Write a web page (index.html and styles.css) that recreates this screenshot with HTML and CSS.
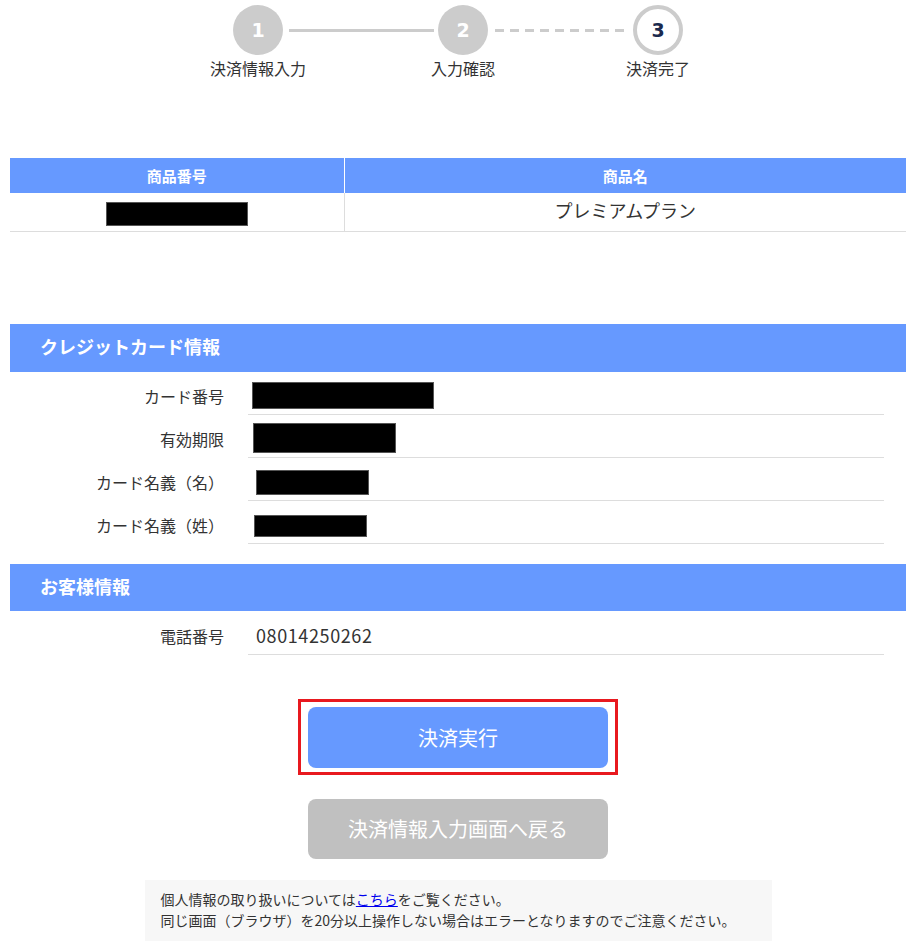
FILE: index.html
```html
<!DOCTYPE html>
<html lang="ja">
<head>
<meta charset="utf-8">
<title>決済確認</title>
<link rel="stylesheet" href="styles.css">
</head>
<body>
<div class="page">
  <div class="stepper">
    <div class="step">
      <div class="circle done">1</div>
      <div class="step-label">決済情報入力</div>
    </div>
    <div class="connector solid"></div>
    <div class="step">
      <div class="circle done">2</div>
      <div class="step-label">入力確認</div>
    </div>
    <div class="connector dashed"></div>
    <div class="step">
      <div class="circle current">3</div>
      <div class="step-label">決済完了</div>
    </div>
  </div>

  <table class="product">
    <thead>
      <tr><th class="col-id">商品番号</th><th>商品名</th></tr>
    </thead>
    <tbody>
      <tr><td class="col-id"><span class="redact r-id"></span></td><td class="name-cell">プレミアムプラン</td></tr>
    </tbody>
  </table>

  <div class="section-head card-head">クレジットカード情報</div>
  <div class="info-row">
    <div class="info-label">カード番号</div>
    <div class="info-value"><span class="redact r1"></span></div>
  </div>
  <div class="info-row">
    <div class="info-label">有効期限</div>
    <div class="info-value"><span class="redact r2"></span></div>
  </div>
  <div class="info-row">
    <div class="info-label">カード名義（名）</div>
    <div class="info-value"><span class="redact r3"></span></div>
  </div>
  <div class="info-row">
    <div class="info-label">カード名義（姓）</div>
    <div class="info-value"><span class="redact r4"></span></div>
  </div>

  <div class="section-head customer-head">お客様情報</div>
  <div class="info-row phone-row">
    <div class="info-label">電話番号</div>
    <div class="info-value"><span class="phone">08014250262</span></div>
  </div>

  <div class="confirm-frame">
    <button class="btn btn-primary" type="button">決済実行</button>
  </div>
  <button class="btn btn-back" type="button">決済情報入力画面へ戻る</button>

  <div class="notice">
    <p>個人情報の取り扱いについては<a href="#" class="notice-link">こちら</a>をご覧ください。</p>
    <p>同じ画面（ブラウザ）を20分以上操作しない場合はエラーとなりますのでご注意ください。</p>
  </div>
</div>
</body>
</html>
```

FILE: styles.css
```css
* { box-sizing: border-box; }

html, body {
  margin: 0;
  padding: 0;
  background: #fff;
}

body {
  font-family: "Noto Sans CJK JP", "Noto Sans", sans-serif;
  color: #333;
}

.page {
  padding: 0 10px 4px;
}

/* stepper */
.stepper {
  display: flex;
  width: 450px;
  margin: 5px auto 0;
}

.step {
  width: 50px;
  display: flex;
  flex-direction: column;
  align-items: center;
}

.circle {
  width: 50px;
  height: 50px;
  border-radius: 50%;
  display: flex;
  align-items: center;
  justify-content: center;
  font-family: "DejaVu Sans", sans-serif;
  font-weight: bold;
  font-size: 19px;
}

.circle.done {
  background: #cccccc;
  color: #fff;
}

.circle.current {
  background: #fff;
  border: 4px solid #cccccc;
  color: #1b2a4e;
}

.step-label {
  white-space: nowrap;
  font-size: 16px;
  line-height: 24px;
  margin-top: 1px;
}

.connector {
  height: 3px;
  margin-top: 24px;
}

.connector.solid {
  width: 145px;
  margin-left: 6px;
  margin-right: 4px;
  background: #cccccc;
}

.connector.dashed {
  width: 134px;
  margin-left: 7px;
  margin-right: 4px;
  background: repeating-linear-gradient(to right, #cccccc 0 9px, transparent 9px 15px);
}

/* product table */
.product {
  width: 100%;
  border-collapse: collapse;
  margin-top: 78px;
}

.product th {
  background: #6699ff;
  color: #fff;
  font-size: 15px;
  font-weight: bold;
  height: 35px;
  padding: 0;
  text-align: center;
}

.product th.col-id {
  border-right: 1px solid #fff;
}

.product td {
  height: 38px;
  padding: 0;
  text-align: center;
  font-size: 18px;
  border-bottom: 1px solid #dddddd;
  vertical-align: middle;
}

.product td.name-cell {
  padding-bottom: 3px;
}

.product td.col-id {
  border-right: 1px solid #dddddd;
}

.col-id {
  width: 334px;
}

.redact {
  display: inline-block;
  background: #000;
  border: 1px solid #555;
  vertical-align: middle;
}

.r-id { width: 142px; height: 24px; }
.r1 { width: 182px; height: 27px; margin-left: 4px; margin-top: -1px; }
.r2 { width: 143px; height: 30px; margin-left: 5px; margin-top: -2px; }
.r3 { width: 113px; height: 25px; margin-left: 8px; margin-top: 2px; }
.r4 { width: 113px; height: 22px; margin-left: 6px; margin-top: 2px; }

/* sections */
.section-head {
  background: #6699ff;
  color: #fff;
  font-weight: bold;
  font-size: 18px;
  height: 47px;
  padding-left: 30px;
  padding-bottom: 3px;
  display: flex;
  align-items: center;
}

.card-head { margin-top: 92px; height: 48px; }
.customer-head { margin-top: 20px; }

.info-row {
  display: grid;
  grid-template-columns: 238px 636px;
  height: 43px;
}

.phone-row {
  height: 44px;
}

.info-label,
.info-value {
  display: flex;
  align-items: center;
  padding-top: 6px;
}

.info-label {
  justify-content: flex-end;
  padding-right: 24px;
  font-size: 16px;
}

.info-value {
  border-bottom: 1px solid #dddddd;
}

.phone {
  margin-left: 8px;
  font-size: 18px;
  letter-spacing: 0.6px;
}

/* buttons */
.confirm-frame {
  width: 320px;
  margin: 44px auto 0;
  border: 3px solid #e8191f;
  padding: 5px 7px 4px 7px;
}

.btn {
  display: block;
  width: 300px;
  border: none;
  border-radius: 8px;
  color: #fff;
  font-family: "Noto Sans CJK JP", "Noto Sans", sans-serif;
  font-size: 20px;
  padding: 0;
  cursor: pointer;
}

.btn-primary {
  height: 61px;
  background: #6699ff;
}

.btn-back {
  height: 60px;
  margin: 24px auto 0;
  background: #c0c0c0;
}

/* notice */
.notice {
  width: 627px;
  margin: 21px auto 0;
  background: #f7f7f7;
  padding: 9px 16px 10px;
  font-size: 14px;
  line-height: 21px;
}

.notice p {
  margin: 0;
}

.notice-link {
  color: #0000ee;
  text-decoration: underline;
}
```
